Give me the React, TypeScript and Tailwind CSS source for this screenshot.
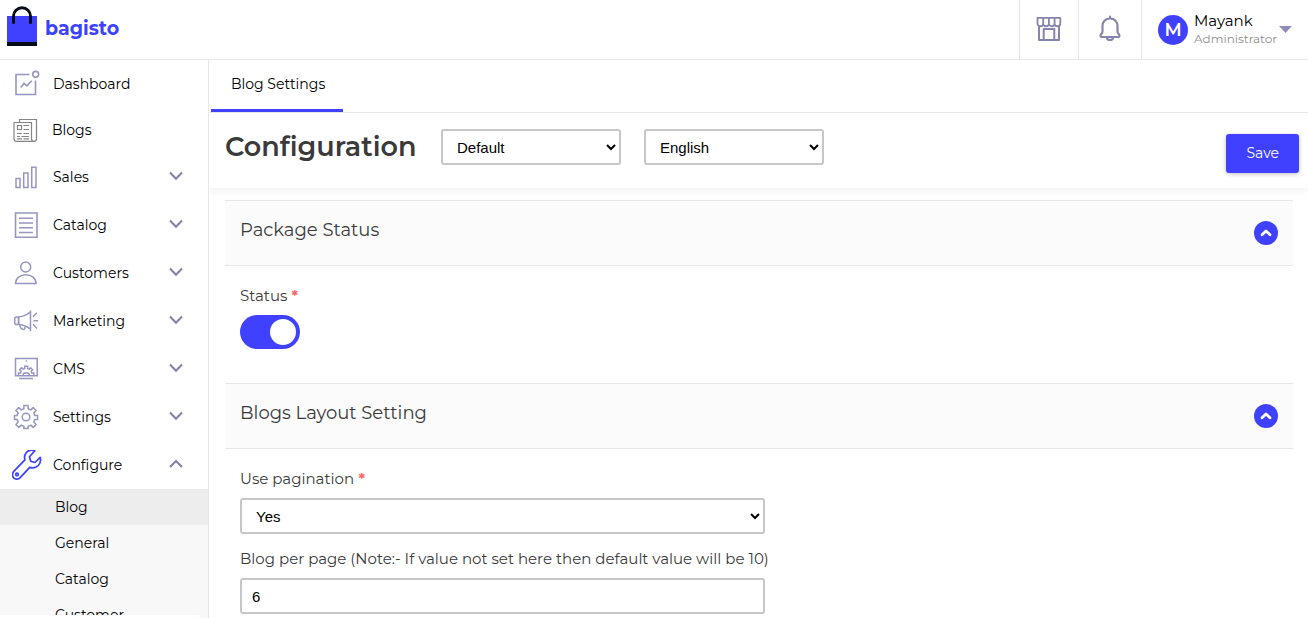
import type { ReactNode } from "react";

const strokeIcon = "shrink-0 text-[#9796c2]";

function DashboardIcon() {
  return (
    <svg className={strokeIcon} width="28" height="28" viewBox="0 0 28 28" fill="none" stroke="currentColor" strokeWidth="1.6">
      <path d="M17.500 4.500H4v20h19.500V10.500" />
      <circle cx="23.700" cy="4.300" r="2.900" />
      <path d="M8.800 17.500l3.200-4 2.800 2.400 5-5.200" />
    </svg>
  );
}

function BlogsIcon() {
  return (
    <svg className="shrink-0 text-[#858585]" width="28" height="28" viewBox="0 0 28 28" fill="none" stroke="currentColor" strokeWidth="1.2">
      <path d="M7.500 6.500V3.500h17v19.300a2.600 2.600 0 0 1-2.600 2.600H4.500a2.600 2.600 0 0 1-2.500-2.600V6.500h17.500v16.300a2.600 2.600 0 0 0 2.500 2.600" />
      <path d="M5.500 9.500h4v4h-4zM11.500 9.500h5.500M11.500 13.500h5.500M5 17.500h5M11.500 17.500h5.500M5 20.500h3M9.500 20.500h7.500M5 22.800h5M11.500 22.800h5.500" />
    </svg>
  );
}

function SalesIcon() {
  return (
    <svg className={strokeIcon} width="28" height="28" viewBox="0 0 28 28" fill="none" stroke="currentColor" strokeWidth="1.5">
      <path d="M4 15.600h4v9H4zM11.700 10h4.300v14.600h-4.300zM19.700 4.300h4.300v20.300h-4.300z" />
    </svg>
  );
}

function CatalogIcon() {
  return (
    <svg className={strokeIcon} width="28" height="28" viewBox="0 0 28 28" fill="none" stroke="currentColor" strokeWidth="1.6">
      <path d="M3.500 2h21.500v24.200H3.500zM7 7.200h14M7 12h14M7 16.800h14M7 21.500h14" />
    </svg>
  );
}

function CustomersIcon() {
  return (
    <svg className={strokeIcon} width="28" height="28" viewBox="0 0 28 28" fill="none" stroke="currentColor" strokeWidth="1.5">
      <circle cx="13.700" cy="8" r="5" />
      <path d="M3.500 24.500c.2-5.400 4.500-8.800 10.300-8.800s10.100 3.400 10.300 8.800z" />
    </svg>
  );
}

function MarketingIcon() {
  return (
    <svg className={strokeIcon} width="28" height="28" viewBox="0 0 28 28" fill="none" stroke="currentColor" strokeWidth="1.5">
      <path d="M18.500 3.500v20.800M18.200 5c-3.400 3.100-6.800 4.500-11.700 5v7.300c4.500.6 8.500 2.100 11.700 4.700" />
      <rect x="2.700" y="10" width="4" height="7.600" rx="1.800" />
      <path d="M7.800 18.200c.4 2.600 1.700 4.300 3.800 4.200 1.300-.1 1.700-1.200 1.200-2.900M21 9.700l3.800-4M21.500 13.700h4.700M21 17.200l4 4.300" />
    </svg>
  );
}

function CmsIcon() {
  return (
    <svg className={strokeIcon} width="28" height="28" viewBox="0 0 28 28" fill="none" stroke="currentColor" strokeWidth="1.5">
      <path d="M3.500 3.500h21.700v17.200H3.500zM7 23.500h14M13.700 6h1.300" />
      <path d="M6.500 20.500v-2.600h2l.6-1.700-1.400-1.400 2-2 1.400 1.300 1.600-.7v-2.200h2.900v2.200l1.600.7 1.400-1.300 2 2-1.400 1.400.6 1.700h2v2.600" />
      <path d="M10.800 20.500a3.500 3.500 0 0 1 6.800 0" />
    </svg>
  );
}

function SettingsIcon() {
  return (
    <svg className={strokeIcon} width="28" height="28" viewBox="0 0 28 28" fill="none" stroke="currentColor" strokeWidth="1.500" strokeLinejoin="round">
      <circle cx="14" cy="14" r="3.800" />
      <path d="M11.900 2.500h4.200v3.300l2.700 1.100 2.400-2.300 2.900 2.900-2.300 2.400 1.100 2.700h2.700v3.800h-2.700l-1.100 2.700 2.300 2.400-2.900 2.900-2.400-2.300-2.700 1.100v2.400h-4.200v-2.400l-2.700-1.100-2.400 2.300-2.900-2.900 2.300-2.400-1.100-2.700H2.500v-3.800h2.600l1.100-2.700-2.300-2.400 2.900-2.900 2.400 2.300 2.700-1.100z" />
    </svg>
  );
}

function ConfigureIcon() {
  return (
    <svg className="shrink-0 text-[#3c41ff]" width="31" height="31" viewBox="1 1 31 31" fill="none" stroke="currentColor" strokeWidth="1.700" strokeLinejoin="round">
      <path d="M23.800 1.800c-3-1-6.500-.5-8.400 1.700-1.900 2.200-2.200 4.800-1.500 7.300L3.200 21.900c-3.300 3.500-1.500 8 2.200 8.300 1.500.1 2.900-.6 4-1.800l9.300-10c3.100 1 6.500.3 8.600-1.900 2.200-2.300 2.700-5.300 1.900-8.200l-5.300 5.200-4.200-1.300-1.200-4.400z" />
      <circle cx="6" cy="25.500" r="1.300" />
    </svg>
  );
}

function Chevron({ up = false }: { up?: boolean }) {
  return (
    <svg className="mb-0.5 ml-auto shrink-0 text-[#8484ad]" width="14" height="10" viewBox="0 0 14 10" fill="none" stroke="currentColor" strokeWidth="2.200">
      <path d={up ? "M1 8l6-6 6 6" : "M1 1.500l6 6.200 6-6.200"} />
    </svg>
  );
}

type Item = { label: string; icon: ReactNode; arrow?: "up" | "down" };

const items: Item[] = [
  { label: "Sales", icon: <SalesIcon />, arrow: "down" },
  { label: "Catalog", icon: <CatalogIcon />, arrow: "down" },
  { label: "Customers", icon: <CustomersIcon />, arrow: "down" },
  { label: "Marketing", icon: <MarketingIcon />, arrow: "down" },
  { label: "CMS", icon: <CmsIcon />, arrow: "down" },
  { label: "Settings", icon: <SettingsIcon />, arrow: "down" },
];

function NavRow({ label, icon, arrow }: Item) {
  return (
    <li>
      <a href="#" className="flex h-12 items-center pr-[25px] pl-3">
        <span className="flex w-[41px] items-center">{icon}</span>
        {label}
        {arrow && <Chevron up={arrow === "up"} />}
      </a>
    </li>
  );
}

function Sidebar() {
  return (
    <aside className="flex w-[209px] shrink-0 flex-col border-r border-[#e7e7e7] text-sm text-black">
      <nav className="min-h-0 flex-1 overflow-hidden">
        <ul>
          <NavRow label="Dashboard" icon={<DashboardIcon />} />
          <li>
            <a href="#" className="flex h-[45px] items-center pb-0.5 pl-3">
              <span className="flex w-10 items-center"><BlogsIcon /></span>
              Blogs
            </a>
          </li>
          {items.map((item) => (
            <NavRow key={item.label} {...item} />
          ))}
          <NavRow label="Configure" icon={<ConfigureIcon />} arrow="up" />
        </ul>
        <ul className="bg-[#f8f8f8]">
          {["Blog", "General", "Catalog", "Customer"].map((label) => (
            <li key={label}>
              <a
                href="#"
                className={
                  label === "Blog"
                    ? "flex h-9 items-center bg-[#ededed] pl-[55px]"
                    : "flex h-9 items-center pl-[55px]"
                }
              >
                {label}
              </a>
            </li>
          ))}
        </ul>
      </nav>
      <div className="h-[3px] bg-[#f8f8f8] pr-[9px]">
        <div className="h-full bg-white" />
      </div>
    </aside>
  );
}

function Header() {
  return (
    <header className="flex h-[60px] shrink-0 border-b border-[#e7e7e7]">
      <a href="#" className="flex items-center gap-2 pl-[7px] text-[19px] font-bold text-[#3c41ff]">
        <svg width="30" height="46" viewBox="0 0 30 46" fill="none" className="-mt-1.5">
          <path d="M0 12h30v27H0z" fill="#4041ff" />
          <path d="M0 38h30v4H0z" fill="#060c17" />
          <path d="M6.500 18.500v-6.300a8.500 8.500 0 0 1 17 0v6.300" stroke="#060c17" strokeWidth="3" strokeLinecap="round" />
        </svg>
        <span>bagisto</span>
      </a>
      <div className="ml-auto flex">
        <a href="#" aria-label="Visit shop" className="flex w-[59px] items-center justify-center border-l border-[#e7e7e7] text-[#8585ae]">
          <svg width="26" height="26" viewBox="0 0 26 26" fill="none" stroke="currentColor" strokeWidth="1.800" strokeLinejoin="round" className="-mt-0.5">
            <path d="M1.500 1.800h22.800v5.600a2.850 2.850 0 0 1-5.700 0 2.850 2.850 0 0 1-5.700 0 2.850 2.850 0 0 1-5.700 0 2.850 2.850 0 0 1-5.700 0zM7.200 2v5.400M12.900 2v5.400M18.600 2v5.400" />
            <path d="M3 10v14h20V10" strokeWidth="2" />
            <path d="M7.700 23.800V13h10.600v10.800" strokeWidth="2" />
          </svg>
        </a>
        <button type="button" aria-label="Notifications" className="flex w-[63px] items-center justify-center border-l border-[#e7e7e7] text-[#8585ae]">
          <svg width="24" height="27" viewBox="0 0 24 27" fill="none" stroke="currentColor" strokeWidth="2.200" strokeLinecap="round" strokeLinejoin="round" className="-mt-0.5">
            <path d="M12 1.500v2M12 3.500c4.600 0 7.500 3.300 7.500 7.400v5.600c0 2 2 2.400 2 4.300 0 .7-.5 1.200-1.300 1.200H3.800c-.8 0-1.300-.5-1.300-1.200 0-1.900 2-2.300 2-4.300v-5.600c0-4.100 2.900-7.400 7.500-7.400zM8.800 22.300c.2 1.800 1.400 2.700 3.200 2.700s3-.9 3.200-2.700" />
          </svg>
        </button>
        <button type="button" className="flex items-center border-l border-[#e7e7e7] px-4 text-left">
          <span className="flex size-[30px] items-center justify-center rounded-full bg-[#4041ff] text-lg font-semibold text-white">M</span>
          <span className="ml-1.5 block w-[85px] whitespace-nowrap">
            <span className="block text-[15px] leading-[18px] text-black">Mayank</span>
            <span className="block text-xs leading-[18px] text-[#8e8e8e]">Administrator</span>
          </span>
          <svg width="13" height="7" viewBox="0 0 13 7" fill="#8e8eb5"><path d="M0 0h13L6.500 7z" /></svg>
        </button>
      </div>
    </header>
  );
}

const field =
  "h-9 rounded-[3px] border-2 border-[#c7c7c7] bg-white px-2.5 font-['Liberation_Sans',Arial,sans-serif] text-[15px] text-black";

function Section({ title, children }: { title: string; children: ReactNode }) {
  return (
    <section>
      <div className="flex h-[66px] items-center justify-between border-y border-[#e7e7e7] bg-[#fbfbfb] px-[15px]">
        <h2 className="pb-1.5 text-lg text-[#3a3a3a]">{title}</h2>
        <button type="button" aria-label={"Collapse " + title} className="flex size-6 items-center justify-center rounded-full bg-[#4041ff]">
          <svg width="12" height="8" viewBox="0 0 12 8" fill="none" stroke="white" strokeWidth="2.800" strokeLinecap="round" strokeLinejoin="round">
            <path d="M2 5.800L6 2l4 3.800" />
          </svg>
        </button>
      </div>
      <div className="px-[15px] pt-5">{children}</div>
    </section>
  );
}

function Required() {
  return <span className="font-bold text-[#fc6868]"> *</span>;
}

export default function App() {
  return (
    <div className="flex h-screen flex-col overflow-hidden bg-white font-[Montserrat,Inter,sans-serif] text-[#3a3a3a]">
      <Header />
      <div className="flex min-h-0 flex-1">
        <Sidebar />
        <main className="min-w-0 flex-1 overflow-hidden">
          <div className="flex h-[53px] border-b border-[#e7e7e7] pl-0.5">
            <a href="#" className="mb-px flex h-[52px] items-center border-b-[3px] border-[#4041ff] pr-[18px] pb-0.5 pl-5 text-sm text-black">
              Blog Settings
            </a>
          </div>
          <div className="flex h-[75px] items-start pt-4 pr-[9px] pl-4 shadow-[0_5px_6px_0_rgba(0,0,0,0.04)]">
            <h1 className="w-54 text-[27px] leading-9 font-semibold">Configuration</h1>
            <select aria-label="Channel" className={field + " w-45"} defaultValue="Default">
              <option>Default</option>
            </select>
            <select aria-label="Locale" className={field + " ml-[23px] w-45"} defaultValue="English">
              <option>English</option>
            </select>
            <button type="button" className="mt-[5px] ml-auto h-[39px] rounded-[3px] bg-[#4041ff] px-5 pb-0.5 text-sm text-white shadow-[0_1px_4px_rgba(0,0,0,0.25)]">
              Save
            </button>
          </div>
          <div className="mt-3 pr-[15px] pl-4">
            <Section title="Package Status">
              <p id="status-label" className="text-[15px] leading-5">Status<Required /></p>
              <label className="mt-[9px] mb-[34px] block w-15 cursor-pointer">
                <input type="checkbox" defaultChecked aria-labelledby="status-label" className="peer sr-only" />
                <span className="flex h-[34px] items-center rounded-full bg-[#c7c7c7] px-1 peer-checked:justify-end peer-checked:bg-[#4041ff]">
                  <span className="size-[26px] rounded-full bg-white" />
                </span>
              </label>
            </Section>
            <Section title="Blogs Layout Setting">
              <label htmlFor="pagination" className="block text-[15px] leading-5">Use pagination<Required /></label>
              <select id="pagination" className={field + " mt-[9px] block w-1/2 min-w-[525px]"} defaultValue="Yes">
                <option>Yes</option>
                <option>No</option>
              </select>
              <label htmlFor="per-page" className="mt-[15px] block text-[15px] leading-5">
                Blog per page (Note:- If value not set here then default value will be 10)
              </label>
              <input id="per-page" type="text" defaultValue="6" className={field + " mt-[9px] block w-1/2 min-w-[525px]"} />
            </Section>
          </div>
        </main>
      </div>
    </div>
  );
}
